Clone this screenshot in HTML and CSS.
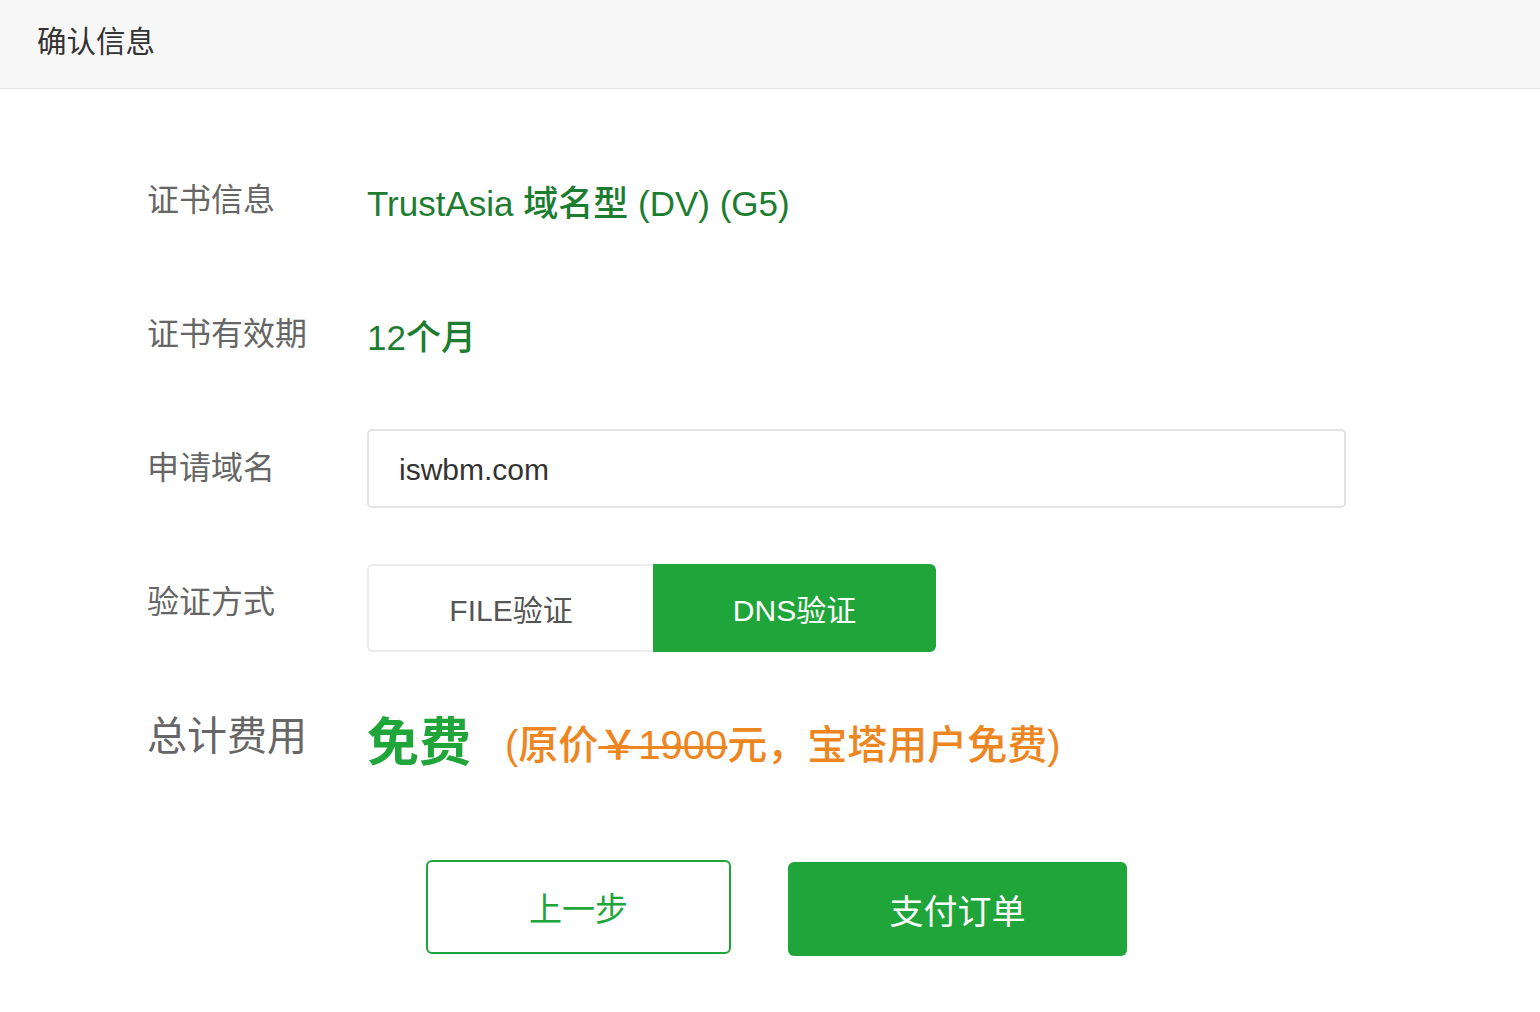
FILE: index.html
```html
<!DOCTYPE html>
<html lang="zh-CN">
<head>
<meta charset="utf-8">
<title>确认信息</title>
<link rel="stylesheet" href="styles.css">
</head>
<body>
<header class="head">确认信息</header>
<main class="form">
  <div class="row">
    <div class="label">证书信息</div>
    <div class="value">TrustAsia <span class="cjk-b">域名型</span> (DV) (G5)</div>
  </div>
  <div class="row">
    <div class="label">证书有效期</div>
    <div class="value">12<span class="cjk-b">个月</span></div>
  </div>
  <div class="row">
    <div class="label">申请域名</div>
    <div class="input">iswbm.com</div>
  </div>
  <div class="row">
    <div class="label">验证方式</div>
    <div class="toggle">
      <div class="opt">FILE验证</div>
      <div class="opt active">DNS验证</div>
    </div>
  </div>
  <div class="row">
    <div class="label big">总计费用</div>
    <div class="price"><span class="free">免费</span><span class="note">(原价<s>￥1900</s>元，宝塔用户免费)</span></div>
  </div>
  <div class="actions">
    <div class="btn prev">上一步</div>
    <div class="btn pay">支付订单</div>
  </div>
</main>
</body>
</html>
```
FILE: styles.css
```css
html, body {
  margin: 0;
  padding: 0;
  background: #fff;
  font-family: "Liberation Sans", "Noto Sans CJK SC", sans-serif;
}
.head {
  height: 89px;
  box-sizing: border-box;
  background: #f7f7f7;
  border-bottom: 1px solid #e6e6e6;
  padding-left: 37px;
  display: flex;
  align-items: center;
  font-size: 29.5px;
  color: #333;
  padding-bottom: 10px;
}
.form {
  padding-top: 44px;
  padding-left: 147px;
}
.row {
  display: flex;
  align-items: center;
  height: 134px;
}
.label {
  width: 220px;
  flex: none;
  font-size: 32px;
  color: #666;
  margin-top: -6px;
}
.label.big {
  font-size: 40px;
  margin-top: -6px;
}
.value {
  font-size: 35px;
  color: #1c7d30;
}
.cjk-b {
  font-weight: 500;
}
.input {
  width: 979px;
  height: 79px;
  box-sizing: border-box;
  border: 2px solid #e3e3e3;
  border-radius: 5px;
  padding-left: 30px;
  display: flex;
  align-items: center;
  font-size: 30px;
  color: #333;
  padding-top: 3px;
}
.toggle {
  display: flex;
  height: 88px;
  margin-top: 11px;
}
.opt {
  width: 286px;
  box-sizing: border-box;
  border: 2px solid #ececec;
  display: flex;
  align-items: center;
  justify-content: center;
  font-size: 30px;
  color: #555;
}
.opt:first-child {
  border-radius: 6px 0 0 6px;
  border-right: none;
}
.opt.active {
  width: 283px;
  background: #20a53a;
  border-color: #20a53a;
  color: #fff;
  border-radius: 0 6px 6px 0;
}
.price {
  display: flex;
  align-items: center;
  margin-top: 4px;
}
.free {
  font-size: 52px;
  font-weight: 700;
  color: #20a53a;
  margin-right: 34px;
}
.note {
  font-size: 40px;
  font-weight: 500;
  color: #ed8621;
  margin-top: 8px;
}
.note s {
  text-decoration-thickness: 3px;
}
.actions {
  display: flex;
  align-items: flex-start;
  gap: 57px;
  padding-left: 279px;
  margin-top: 57px;
}
.btn {
  height: 94px;
  box-sizing: border-box;
  display: flex;
  align-items: center;
  justify-content: center;
  border-radius: 6px;
}
.prev {
  width: 305px;
  border: 2px solid #20a53a;
  color: #20a53a;
  font-size: 33px;
}
.pay {
  width: 339px;
  margin-top: 2px;
  background: #20a53a;
  color: #fff;
  font-size: 34px;
}
```
